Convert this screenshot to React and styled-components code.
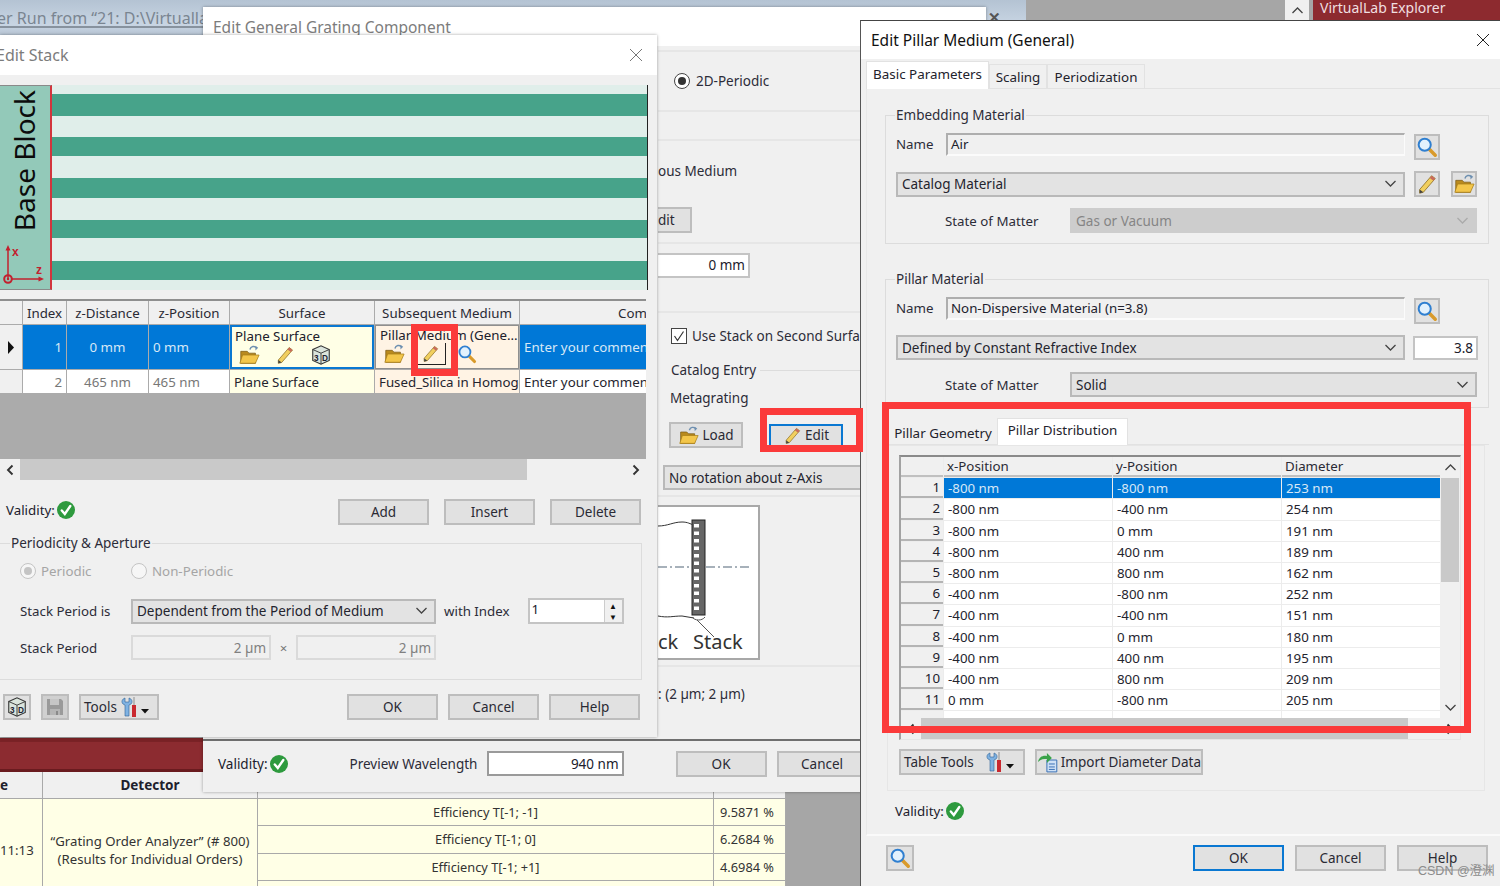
import React from 'react';
import styled, { createGlobalStyle } from 'styled-components';

const Global = createGlobalStyle`
  html, body { margin: 0; padding: 0; background: #a6a6a6; }
  * { box-sizing: border-box; }
  body { font-family: "Noto Sans", "Open Sans", sans-serif; font-size: 13.3px; color: #20202c; }
`;

/* ---------- icons ---------- */
const FolderIcon = ({ s = 22 }) => (
  <svg width={s} height={s} viewBox="0 0 24 24">
    <path d="M3 8h7l2 2h7v11H3z" fill="#b98a1e" stroke="#7a5a14" strokeWidth=".8" />
    <path d="M5 12h18l-4 9H2z" fill="#f3c64a" stroke="#a67c16" strokeWidth=".8" />
    <path d="M13 6c1-4 5-4 7-2" fill="none" stroke="#6d8fb0" strokeWidth="1.6" />
    <path d="M19 2l3 2-3 3z" fill="#6d8fb0" />
  </svg>
);
const PencilIcon = ({ s = 22 }) => (
  <svg width={s} height={s} viewBox="0 0 24 24">
    <path d="M17 3l4 3L8 21l-4 1 0-4z" fill="#f1cf5e" stroke="#8d6f24" strokeWidth=".9" />
    <path d="M17 3l4 3-2 2.4-4-3z" fill="#c96a5c" />
    <path d="M4 18l0 4 4-1z" fill="#444" />
  </svg>
);
const LensIcon = ({ s = 22 }) => (
  <svg width={s} height={s} viewBox="0 0 24 24">
    <path d="M14 14l7 7" stroke="#d99a2b" strokeWidth="3.8" strokeLinecap="round" />
    <circle cx="9.5" cy="9.5" r="6.6" fill="#e2f1fd" stroke="#2f7fd0" strokeWidth="2.2" />
  </svg>
);
const CubeIcon = ({ s = 24 }) => (
  <svg width={s} height={s} viewBox="0 0 24 24">
    <path d="M3 6l9-4 9 4v12l-9 4-9-4z" fill="#dbe5dd" stroke="#333" strokeWidth="1.2" />
    <path d="M3 6l9 4 9-4M12 10v12" fill="none" stroke="#333" strokeWidth="1" />
    <text x="4.4" y="18" fontSize="9" fontFamily="Liberation Sans" fontWeight="700" fill="#223">3</text>
    <text x="13.2" y="18" fontSize="9" fontFamily="Liberation Sans" fontWeight="700" fill="#223">D</text>
  </svg>
);
const SaveIcon = () => (
  <svg width="20" height="20" viewBox="0 0 20 20">
    <path d="M2 2h14l2 2v14H2z" fill="#9a9a9a" />
    <path d="M5 2h9v6H5z" fill="#c6c6c6" />
    <path d="M5 12h10v6H5z" fill="#b5b5b5" />
    <path d="M11 14h2v4h-2z" fill="#8a8a8a" />
  </svg>
);
const ToolsIcon = () => (
  <svg width="30" height="22" viewBox="0 0 30 22">
    <path d="M5 2c-3 1-4 4-2 6l2 1v11h4V9l2-1c2-2 1-5-2-6v4H5z" fill="#7fb2e2" stroke="#2b5f94" strokeWidth=".6" />
    <path d="M12 9h4v12h-4z" fill="#c9282f" />
    <path d="M13 1h2v8h-2z" fill="#b8b8b8" />
    <path d="M21 13h8l-4 4.500z" fill="#111" />
  </svg>
);
const CheckIcon = () => (
  <svg width="20" height="20" viewBox="0 0 20 20">
    <circle cx="10" cy="10" r="9" fill="#2e9a3e" />
    <path d="M5.800 10.500l3 3.500 5.500-8" fill="none" stroke="#fff" strokeWidth="2.400" strokeLinecap="round" />
  </svg>
);
const ImportIcon = () => (
  <svg width="24" height="22" viewBox="0 0 24 22">
    <path d="M10 9h10v12H10z" fill="#cfe1f6" stroke="#3a70b5" strokeWidth="1" />
    <path d="M12 13h6M12 16h6M12 18.500h6" stroke="#3a70b5" strokeWidth="1" />
    <path d="M1 11c1-5 5-7 9-6V2l5 5-5 5V8c-3 0-6 0-9 3z" fill="#3aa34a" />
  </svg>
);
const Chevron = ({ $c = '#444' }) => (
  <svg width="13" height="8" viewBox="0 0 13 8"><path d="M1.500 1l5 5 5-5" fill="none" stroke={$c} strokeWidth="1.300" /></svg>
);
const ScrollArrow = ({ left }) => (
  <svg width="10" height="12" viewBox="0 0 10 12">
    <path d={left ? 'M7.500 1.500L3 6l4.500 4.500' : 'M2.500 1.500L7 6l-4.500 4.500'} fill="none" stroke="#333" strokeWidth="1.900" />
  </svg>
);
const CloseX = ({ c = '#222' }) => (
  <svg width="14" height="14" viewBox="0 0 14 14"><path d="M1 1l12 12M13 1L1 13" stroke={c} strokeWidth="1" /></svg>
);
const Tick = () => (
  <svg width="12" height="12" viewBox="0 0 12 12"><path d="M1.500 6l3 4.500 6-9" fill="none" stroke="#333" strokeWidth="1.200" /></svg>
);
const Axes = () => (
  <svg width="46" height="44" viewBox="0 0 46 44">
    <g stroke="#c2202e" strokeWidth="1.500" fill="none">
      <path d="M8 35V6" /><path d="M11 35h30" />
      <circle cx="8" cy="35" r="3.800" strokeWidth="2" />
    </g>
    <circle cx="8" cy="35" r="1.200" fill="#c2202e" />
    <path d="M8 1l-2.500 5.500h5zM44 35l-5.500-2.500v5z" fill="#c2202e" />
    <text x="12" y="12" fontSize="12" fontFamily="Liberation Sans" fontWeight="700" fill="#c2202e">x</text>
    <text x="36" y="30" fontSize="12" fontFamily="Liberation Sans" fontWeight="700" fill="#c2202e">z</text>
  </svg>
);

/* ---------- shell ---------- */
const Desktop = styled.div`
  position: relative; width: 1500px; height: 886px; overflow: hidden; background: #a6a6a6;
`;
const AppStrip = styled.div`
  position: absolute; left: 0; top: 0; width: 1026px; height: 36px;
  background: linear-gradient(#b4c3d3, #c8d5e3 70%, #b7c5d4);
  border-bottom: 1px solid #9aa8b6;
`;
const StripTitle = styled.div`
  height: 28px; padding-top: 8px; border-bottom: 2px solid #87929e;
  font-size: 16px; line-height: 20px; color: #7a8591; white-space: nowrap; text-indent: -3px; width: 203px; overflow: hidden;
`;
const StripClose = styled.div`
  position: absolute; left: 988px; top: 10px; width: 16px; height: 14px; font-size: 15px; line-height: 14px; font-weight: 700; color: #555;
`;
const ExplorerCorner = styled.div`
  position: absolute; left: 1285px; top: 0; width: 215px; height: 20px; display: flex;
`;
const ScrollUp = styled.div`
  width: 24px; height: 20px; background: #f0f0f0; color: #444; display: flex; align-items: center; justify-content: center;
`;
const UpFlip = styled.span` display: flex; transform: rotate(180deg); `;
const ExplorerTitle = styled.div`
  flex: 1; margin-left: 4px; background: #8d2a2f; color: #f0dfe0; font-size: 14px; line-height: 15px; padding-left: 7px;
`;

/* ---------- results table behind the dialogs ---------- */
const Results = styled.div`
  position: absolute; left: 0; top: 738px; width: 786px; height: 148px; display: flex; flex-direction: column; overflow: hidden;
`;
const RedBand = styled.div`
  height: 34px; flex: none; background: #8c2b30; border-top: 4px solid #7a2226; border-bottom: 3px solid #6a1b1f;
`;
const ResultGrid = styled.div`
  flex: none; display: grid; grid-template-columns: 42px 214px 455px 71px; grid-template-rows: 26px 26.300px 26.300px 26.300px 20px; gap: 1px; background: #a9a9a9;
`;
const ResultHead = styled.div`
  background: #f0f0f0; font-weight: 700; display: flex; align-items: center; justify-content: center; font-size: 13.500px;
  overflow: hidden;
`;
const ResultHeadE = styled(ResultHead)` justify-content: flex-start; `;
const ResultSpan = styled.div`
  grid-row: 2 / span 4; background: #ffffe6; display: flex; align-items: center; justify-content: ${p => (p.$left ? 'flex-start' : 'center')}; text-align: center; line-height: 18px; font-size: 13.200px; color: #333;
`;
const ResultCell = styled.div`
  background: #ffffe6; display: flex; align-items: center; justify-content: center; font-size: 12.800px; color: #333; white-space: nowrap; overflow: hidden;
`;
const ResultValue = styled(ResultCell)` justify-content: flex-start; padding-left: 6px; `;

/* ---------- generic controls ---------- */
const Window = styled.div`
  position: absolute; left: ${p => p.$x}px; top: ${p => p.$y}px; width: ${p => p.$w}px; height: ${p => p.$h}px;
  background: #f0f0f0; display: flex; flex-direction: column; overflow: hidden;
  box-shadow: 0 0 3px rgba(0,0,0,.35);
`;
const TitleBar = styled.div`
  height: ${p => p.$h}px; flex: none; background: #fff; display: flex; align-items: center; justify-content: space-between;
  padding: 0 ${p => p.$pr ?? 15}px 0 ${p => p.$pl ?? 10}px; font-size: ${p => p.$fs ?? 15.500}px;
  color: ${p => p.$c ?? '#7c7c7c'}; overflow: hidden; white-space: nowrap;
`;
const ClippedTitle = styled.span` margin-left: -4px; `;
const Btn = styled.div`
  width: ${p => p.$w ?? 91}px; height: ${p => p.$h ?? 26}px; flex: none; background: ${p => (p.$dim ? '#d0d0d0' : '#e1e1e1')};
  border: ${p => (p.$primary ? '2px solid #0a78d2' : '2px solid #bdbdbd')}; display: flex; align-items: center;
  justify-content: ${p => p.$j ?? 'center'}; gap: ${p => p.$gap ?? 3}px; padding-left: ${p => p.$pl ?? 0}px; margin-left: ${p => p.$ml ?? 0}px;
  margin-top: ${p => p.$nudge ?? 0}px; margin-bottom: ${p => -(p.$nudge ?? 0)}px;
  font-size: 13.500px; white-space: nowrap; color: #2a2a34;
`;
const Select = styled.div`
  width: ${p => p.$w}px; height: 25px; flex: none; display: flex; align-items: center; justify-content: space-between;
  padding: 0 6px 0 4px; background: ${p => (p.$off ? '#cdcdcd' : '#e3e3e3')}; border: 2px solid ${p => (p.$off ? '#cdcdcd' : '#b9b9b9')};
  font-size: 13.500px; color: ${p => (p.$off ? '#858585' : '#24242e')}; white-space: nowrap; overflow: hidden;
  margin-top: ${p => p.$mt ?? 0}px;
`;
const Field = styled.div`
  width: ${p => p.$w}px; height: ${p => p.$h ?? 25}px; flex: none; display: flex; align-items: center;
  justify-content: ${p => (p.$right ? 'flex-end' : 'flex-start')}; padding: 0 3px; margin-left: ${p => p.$ml ?? 0}px;
  background: ${p => (p.$off ? '#f0f0f0' : '#fff')}; border: 2px solid ${p => (p.$off ? '#dadada' : p.$dark ? '#9a9a9a' : '#c4c4c4')};
  ${p => p.$openLeft && 'border-left: 0;'}
  color: ${p => (p.$off ? '#808080' : '#20202c')}; font-size: 13.500px; white-space: nowrap;
`;
const ReadOnly = styled.div`
  width: ${p => p.$w}px; height: 23px; flex: none; display: flex; align-items: center; padding: 0 3px; font-size: 13.300px;
  border-top: 2px solid #aeaeae; border-left: 2px solid #aeaeae; border-bottom: 2px solid #fbfbfb; border-right: 1px solid #fbfbfb;
`;
const Label = styled.span`
  flex: none; white-space: nowrap; line-height: 18px; color: ${p => (p.$off ? '#a5a5a5' : '#2c2c38')}; width: ${p => (p.$w ? `${p.$w}px` : 'auto')};
  margin: ${p => p.$m ?? '0'}; padding-left: ${p => p.$pl ?? 0}px;
`;
const Times = styled(Label)` width: 25px; text-align: center; color: #777; `;
const ValidRow = styled.div` display: flex; align-items: center; gap: 1px; white-space: nowrap; flex: none; margin-bottom: ${p => p.$lift ?? 0}px; `;
const Validity = ({ lift }) => <ValidRow $lift={lift}>Validity:<CheckIcon /></ValidRow>;
const Row = styled.div`
  display: flex; align-items: center; gap: ${p => p.$gap ?? 0}px; margin: ${p => p.$m ?? '0'}; padding: ${p => p.$p ?? '0'};
`;
const Spacer = styled.div` flex: 1; `;
const Group = styled.div`
  position: relative; border: 1px solid #dcdcdc; flex: none; margin: ${p => p.$m ?? '0'}; height: ${p => p.$h}px; width: ${p => p.$w}px;
`;
const OpenGroup = styled(Group)` border-left: 0; `;
const GroupTitle = styled.div`
  position: absolute; left: ${p => p.$x ?? 10}px; top: -10px; background: #f0f0f0; padding: 0 1px; font-size: 13.500px; line-height: 18px; white-space: nowrap; color: #2c2c38;
`;
const Radio = styled.span`
  width: 16px; height: 16px; border-radius: 50%; flex: none; border: 1px solid ${p => (p.$off ? '#c4c4c4' : '#444')};
  background: ${p => (p.$off ? '#f6f6f6' : '#fff')}; display: flex; align-items: center; justify-content: center;
  &::after { content: ''; width: 8px; height: 8px; border-radius: 50%; background: ${p => (p.$on ? (p.$off ? '#c4c4c4' : '#333') : 'transparent')}; }
`;

/* ---------- stack dialog ---------- */
const Diagram = styled.div`
  display: flex; width: 648px; height: 205px; margin-top: 10px; flex: none; border-right: 1px solid #222;
`;
const BaseBlock = styled.div`
  position: relative; width: 52px; flex: none; background: #93c9b9; border: 1px solid #8a8a8a; border-right: 2px solid #d2353d; border-left: 0;
`;
const BaseText = styled.div`
  position: absolute; left: 9px; top: 4px; writing-mode: vertical-rl; transform: rotate(180deg); font-size: 28px; line-height: 30px; color: #0c0c0c; white-space: nowrap;
`;
const AxisSlot = styled.div` position: absolute; left: 0; bottom: 1px; height: 44px; `;
const Bands = styled.div` flex: 1; display: flex; flex-direction: column; background: #e0eeea; `;
const Band = styled.div`
  height: ${p => p.$h}px; flex: none; background: ${p => (p.$dark ? '#47a38a' : '#e0eeea')};
`;
const StackTable = styled.div`
  width: 646px; margin-top: 9px; flex: none; border-top: 2px solid #8f8f8f; background: #ababab;
  display: grid; grid-template-columns: 22px 43px 81px 80px 144px 144px 127px; grid-template-rows: 23px 44px 23px 65px; gap: 1px; overflow: hidden;
  font-size: 13.300px;
`;
const HCell = styled.div`
  background: #f0f0f0; display: flex; align-items: center; justify-content: ${p => p.$j ?? 'center'}; white-space: nowrap; overflow: hidden; color: #2a2a34;
`;
const SelCell = styled.div`
  background: #0078d7; color: #d8e8f6; display: flex; align-items: center; justify-content: ${p => p.$j ?? 'flex-start'}; padding: 0 4px; white-space: nowrap; overflow: hidden;
`;
const PlainCell = styled.div`
  background: ${p => p.$bg ?? '#fff'}; color: ${p => p.$c ?? '#24242e'}; display: flex; align-items: center; justify-content: ${p => p.$j ?? 'flex-start'}; padding: 0 4px; white-space: nowrap; overflow: hidden;
`;
const StackCell = styled.div`
  background: ${p => p.$bg}; border: ${p => p.$b}; padding: 0 3px 0 ${p => p.$pl ?? 3}px; overflow: hidden; white-space: nowrap; line-height: 18px;
`;
const IconRow = styled.div` display: flex; gap: ${p => p.$gap ?? 13}px; padding-left: 3px; margin-top: -1px; align-items: center; height: 22px; `;
const PressedIcon = styled.div`
  display: flex; align-items: center; justify-content: center; width: 30px; height: 22px; border-right: 1px solid #222; border-bottom: 1px solid #222;
`;
const GrayFill = styled.div` grid-column: 1 / -1; background: #ababab; `;
const HScroll = styled.div`
  width: ${p => p.$w}px; height: ${p => p.$h ?? 21}px; flex: none; display: flex; align-items: center; background: #f0f0f0; color: #333;
`;
const Thumb = styled.div` height: 100%; background: #c9c9c9; margin: ${p => p.$m}; width: ${p => p.$w}px; flex: none; `;
const ArrowSlot = styled.span` width: ${p => p.$w ?? 20}px; display: flex; justify-content: center; flex: none; `;
const StackControls = styled.div` display: flex; flex-direction: column; width: 642px; `;
const Spin = styled.div`
  width: 96px; height: 26px; flex: none; background: #fff; border: 2px solid #c4c4c4; display: flex; justify-content: space-between; padding-left: 2px; font-size: 13.300px; line-height: 18px; margin-left: 18px;
`;
const SpinBtns = styled.div`
  width: 18px; display: flex; flex-direction: column; background: #f0f0f0; border-left: 1px solid #ccc; font-size: 8px; line-height: 11px; text-align: center; color: #111;
`;

/* ---------- grating dialog ---------- */
const GratingColumn = styled.div`
  margin-left: 455px; width: 330px; display: flex; flex-direction: column; flex: 1; font-size: 13.500px;
`;
const Sect = styled.div`
  height: ${p => p.$h}px; margin-top: ${p => p.$mt ?? 0}px; flex: none; border-top: 2px solid #e6e6e6; ${p => p.$bb && 'border-bottom: 2px solid #e6e6e6;'}
  display: flex; align-items: ${p => p.$a ?? 'center'}; padding: ${p => p.$p ?? '0'}; gap: 6px; position: relative;
`;
const Stacked = styled.div` display: flex; flex-direction: column; align-items: flex-start; `;
const LegendRow = styled.div` display: flex; align-items: center; gap: 4px; width: 300px; margin: 16px 0 0 8px; `;
const LegendLine = styled.div` flex: 1; height: 1px; background: #dcdcdc; `;
const Hr = styled.div` width: 330px; height: 2px; flex: none; background: #e6e6e6; margin: ${p => p.$m}; `;
const Check = styled.span`
  width: 16px; height: 16px; flex: none; background: #fff; border: 1px solid #444; display: flex; align-items: center; justify-content: center;
`;
const Sketch = styled.div`
  width: 102px; height: 155px; margin: 8px 0 0 -5px; flex: none; border: 2px solid #a8a8a8; border-left: 0; background: #fff;
`;
const GratingFoot = styled.div`
  height: 54px; flex: none; border-top: 2px solid #6f6f6f; display: flex; align-items: center; padding: 0 0 7px 15px; font-size: 13.500px;
`;

/* ---------- pillar dialog ---------- */
const PillarWin = styled(Window)` border-left: 1px solid #555; border-top: 1px solid #444; box-shadow: none; `;
const TabStrip = styled.div`
  display: flex; align-items: flex-end; margin: ${p => p.$m}; height: ${p => p.$h}px; flex: none; border-bottom: 1px solid #e2e2e2;
`;
const Tab = styled.div`
  height: ${p => (p.$active ? p.$h + 1 : p.$h - 3)}px; padding: ${p => p.$p}; width: ${p => p.$w}px; flex: none; white-space: nowrap; text-align: center;
  background: ${p => (p.$active ? '#fff' : '#f0f0f0')}; border: ${p => (p.$plain ? '0' : '1px solid #e2e2e2')}; border-bottom: 0;
  margin-bottom: ${p => (p.$active ? -1 : 0)}px; font-size: 13.400px; line-height: 18px; color: #22222c;
`;
const MainPanel = styled.div`
  margin-left: 5px; height: 747px; flex: none; border-left: 1px solid #e8e8e8; border-bottom: 2px solid #fafafa; padding: 26px 11px 0 18px; display: flex; flex-direction: column; position: relative;
`;
const PGroup = styled(Group)` padding: 0 0 0 10px; display: flex; flex-direction: column; `;
const SubPanel = styled.div`
  width: 598px; height: 346px; margin-left: 2px; flex: none; border: 1px solid #e6e6e6; padding: 9px 0 0 11px; display: flex; flex-direction: column;
`;
const Dist = styled.div`
  width: 562px; height: 285px; flex: none; position: relative; border-top: 2px solid #8a8a8a; border-left: 2px solid #a2a2a2; border-right: 1px solid #e6e6e6; border-bottom: 1px solid #e6e6e6; background: #fff; display: flex; flex-direction: column; overflow: hidden;
`;
const DistBody = styled.div` display: flex; flex: 1; min-height: 0; `;
const DistRows = styled.div` width: 539px; display: flex; flex-direction: column; overflow: hidden; flex: none; `;
const DistRow = styled.div`
  display: grid; grid-template-columns: 42px 168px 168px 158px; gap: 1px; height: 21.200px; flex: none; background: #ececec; padding-bottom: 1px; font-size: 13.300px;
`;
const DH = styled.div` background: #f0f0f0; display: flex; align-items: center; padding-left: 3px; border-bottom: 2px solid #c0c0c0; overflow: hidden; white-space: nowrap; color: #2a2a34; `;
const DNum = styled.div` background: #f0f0f0; display: flex; align-items: center; justify-content: flex-end; padding-right: 3px; border-bottom: 2px solid #b4b4b4; `;
const DCell = styled.div`
  background: ${p => (p.$sel ? '#0078d7' : '#fff')}; color: ${p => (p.$sel ? '#d8e8f6' : '#24242e')}; display: flex; align-items: center; padding-left: 4px; white-space: nowrap;
`;
const VBar = styled.div` width: 20px; flex: none; background: #f0f0f0; display: flex; flex-direction: column; align-items: center; `;
const VArrow = styled.div` height: 21px; flex: none; display: flex; align-items: center; justify-content: center; transform: ${p => (p.$up ? 'rotate(180deg)' : 'none')}; `;
const VThumb = styled.div` width: 18px; height: 104px; flex: none; background: #c9c9c9; `;
const Bottom = styled.div`
  display: flex; align-items: center; padding: 9px 12px 0 25px; flex: none;
`;

/* ---------- overlays ---------- */
const Mark = styled.div`
  position: absolute; left: ${p => p.$x}px; top: ${p => p.$y}px; width: ${p => p.$w}px; height: ${p => p.$h}px;
  border: 7px solid #fb3a3a; pointer-events: none;
`;
const Watermark = styled.div`
  position: absolute; left: 1418px; top: 864px; font-size: 12.500px; line-height: 14px; color: #8c8c8c;
  font-family: "Liberation Sans", "Noto Sans CJK SC", sans-serif; white-space: nowrap;
`;

const rows = [
  ['-800 nm', '-800 nm', '253 nm'], ['-800 nm', '-400 nm', '254 nm'], ['-800 nm', '0 mm', '191 nm'],
  ['-800 nm', '400 nm', '189 nm'], ['-800 nm', '800 nm', '162 nm'], ['-400 nm', '-800 nm', '252 nm'],
  ['-400 nm', '-400 nm', '151 nm'], ['-400 nm', '0 mm', '180 nm'], ['-400 nm', '400 nm', '195 nm'],
  ['-400 nm', '800 nm', '209 nm'], ['0 mm', '-800 nm', '205 nm'], ['', '', ''],
];
const bands = [[9, 0], [22, 1], [21, 0], [19, 1], [22, 0], [20, 1], [22, 0], [18, 1], [23, 0], [19, 1], [10, 0]];
const results = [['Efficiency T[-1; -1]', '9.5871 %'], ['Efficiency T[-1; 0]', '6.2684 %'], ['Efficiency T[-1; +1]', '4.6984 %']];

const StackSketch = () => (
  <svg width="100" height="151" viewBox="0 0 100 151">
    <path d="M0 19c10 0 15-4 24-4 6 0 8 2 12 3M0 109c10 2 15 0 24 0l12 2" fill="none" stroke="#333" strokeWidth="1" />
    <rect x="34" y="13" width="13" height="95" fill="#666" stroke="#222" />
    {Array.from({ length: 12 }, (_, i) => <rect key={i} x="36" y={17 + i * 7.500} width="5" height="3.500" fill="#fff" />)}
    <path d="M0 60h34M48 60h44" stroke="#8a98a4" strokeWidth="1.300" strokeDasharray="9 3 2 3" />
    <path d="M34 110c3 4 10 4 13 0M39 113l17 17" fill="none" stroke="#555" strokeWidth="1" />
    <text x="35" y="142" fontSize="20" fontFamily="Noto Sans" fill="#333">Stack</text>
    <text x="0" y="142" fontSize="20" fontFamily="Noto Sans" fill="#333">ck</text>
  </svg>
);

export default function App() {
  return (
    <Desktop>
      <Global />
      <AppStrip>
        <StripTitle>er Run from “21: D:\Virtuallab</StripTitle>
        <StripClose>✕</StripClose>
      </AppStrip>
      <ExplorerCorner>
        <ScrollUp><UpFlip><Chevron /></UpFlip></ScrollUp>
        <ExplorerTitle>VirtualLab Explorer</ExplorerTitle>
      </ExplorerCorner>

      <Results>
        <RedBand />
        <ResultGrid>
          <ResultHeadE>e</ResultHeadE>
          <ResultHead>Detector</ResultHead>
          <ResultHead />
          <ResultHead />
          <ResultSpan $left>11:13</ResultSpan>
          <ResultSpan>“Grating Order Analyzer” (# 800)<br />(Results for Individual Orders)</ResultSpan>
          {results.map(([a, b]) => (
            <React.Fragment key={a}>
              <ResultCell>{a}</ResultCell>
              <ResultValue>{b}</ResultValue>
            </React.Fragment>
          ))}
          <ResultCell />
          <ResultValue />
        </ResultGrid>
      </Results>

      {/* Edit General Grating Component */}
      <Window $x={203} $y={7} $w={783} $h={785}>
        <TitleBar $h={39} $fs={15.500}>Edit General Grating Component</TitleBar>
        <GratingColumn>
          <Sect $h={62} $mt={4} $bb $p="0 0 0 16px"><Radio $on /><Label>2D-Periodic</Label></Sect>
          <Sect $h={103} $mt={27} $a="flex-start">
            <Stacked>
              <Label $m="21px 0 0 0">ous Medium</Label>
              <Btn $w={34} $j="flex-start" style={{ marginTop: 27, borderLeft: 0 }}>dit</Btn>
            </Stacked>
          </Sect>
          <Sect $h={44}><Field $w={92} $right $openLeft>0 mm</Field></Sect>
          <Sect $h={428} $mt={25} $a="flex-start" $p="0 0 0 5px">
            <Stacked>
              <Row $gap={5} $m="14px 0 0 8px"><Check><Tick /></Check><Label>Use Stack on Second Surface</Label></Row>
              <LegendRow><Label>Catalog Entry</Label><LegendLine /></LegendRow>
              <Label $m="10px 0 0 7px">Metagrating</Label>
              <Row $gap={26} $m="15px 0 0 6px">
                <Btn $w={74}><FolderIcon s={21} />Load</Btn>
                <Btn $w={74} $primary $h={23}><PencilIcon s={19} />Edit</Btn>
              </Row>
              <Select $w={320} $mt={17}>No rotation about z-Axis</Select>
              <Hr $m="5px 0 0 -5px" />
              <Sketch><StackSketch /></Sketch>
              <Hr $m="5px 0 0 -5px" />
              <Label $m="18px 0 0 -5px">: (2 µm; 2 µm)</Label>
            </Stacked>
          </Sect>
        </GratingColumn>
        <GratingFoot>
          <Validity />
          <Label $w={137} $m="0 0 0 61px">Preview Wavelength</Label>
          <Field $w={137} $right $dark>940 nm</Field>
          <Btn $ml={52}>OK</Btn>
          <Btn $ml={10}>Cancel</Btn>
        </GratingFoot>
      </Window>

      {/* Edit Stack */}
      <Window $x={0} $y={35} $w={657} $h={702}>
        <TitleBar $h={40} $pl={0} $pr={14} $fs={16}>
          <ClippedTitle>Edit Stack</ClippedTitle><CloseX c="#777" />
        </TitleBar>
        <Diagram>
          <BaseBlock>
            <BaseText>Base Block</BaseText>
            <AxisSlot><Axes /></AxisSlot>
          </BaseBlock>
          <Bands>{bands.map(([h, d], i) => <Band key={i} $h={h} $dark={!!d} />)}</Bands>
        </Diagram>
        <StackTable>
          <HCell />
          <HCell>Index</HCell>
          <HCell>z-Distance</HCell>
          <HCell>z-Position</HCell>
          <HCell>Surface</HCell>
          <HCell>Subsequent Medium</HCell>
          <HCell $j="flex-end">Com</HCell>

          <HCell><svg width="8" height="13" viewBox="0 0 8 13"><path d="M1 0l6 6.500-6 6.500z" fill="#111" /></svg></HCell>
          <SelCell $j="flex-end">1</SelCell>
          <SelCell $j="center">0 mm</SelCell>
          <SelCell>0 mm</SelCell>
          <StackCell $bg="#ffffe6" $b="2px solid #0a78d2">
            Plane Surface
            <IconRow $gap={15}><FolderIcon /><PencilIcon s={20} /><CubeIcon s={22} /></IconRow>
          </StackCell>
          <StackCell $bg="#fff3e4" $b="1px solid #8f8f8f" $pl={4}>
            Pillar Medium (Gene...
            <IconRow $gap={11}><FolderIcon /><PressedIcon><PencilIcon s={19} /></PressedIcon><LensIcon s={20} /></IconRow>
          </StackCell>
          <SelCell>Enter your comment</SelCell>

          <HCell />
          <PlainCell $j="flex-end" $c="#777">2</PlainCell>
          <PlainCell $j="center" $c="#777">465 nm</PlainCell>
          <PlainCell $c="#777">465 nm</PlainCell>
          <PlainCell $bg="#ffffe6">Plane Surface</PlainCell>
          <PlainCell $bg="#fff3e4">Fused_Silica in Homogeneous</PlainCell>
          <PlainCell>Enter your comment</PlainCell>
          <GrayFill />
        </StackTable>
        <HScroll $w={646}>
          <ArrowSlot><ScrollArrow left /></ArrowSlot>
          <Thumb $m="0" $w={507} />
          <Spacer />
          <ArrowSlot><ScrollArrow /></ArrowSlot>
        </HScroll>
        <StackControls>
          <Row $p="19px 1px 0 6px">
            <Validity lift={4} />
            <Spacer />
            <Row $gap={15}><Btn>Add</Btn><Btn>Insert</Btn><Btn>Delete</Btn></Row>
          </Row>
          <OpenGroup $h={137} $w={642} $m="18px 0 0 0">
            <GroupTitle>Periodicity &amp; Aperture</GroupTitle>
            <Row $m="18px 0 0 20px" $gap={5}>
              <Radio $on $off /><Label $off $w={85}>Periodic</Label>
              <Radio $off /><Label $off>Non-Periodic</Label>
            </Row>
            <Row $m="18px 0 0 20px">
              <Label $w={111}>Stack Period is</Label>
              <Select $w={305}>Dependent from the Period of Medium<Chevron /></Select>
              <Label $m="0 0 0 8px">with Index</Label>
              <Spin>1<SpinBtns><span>▲</span><span>▼</span></SpinBtns></Spin>
            </Row>
            <Row $m="11px 0 0 20px">
              <Label $w={111}>Stack Period</Label>
              <Field $off $right $w={140}>2 µm</Field>
              <Times>×</Times>
              <Field $off $right $w={140}>2 µm</Field>
            </Row>
          </OpenGroup>
          <Row $m="14px 2px 0 3px">
            <Btn $w={28}><CubeIcon s={22} /></Btn>
            <Btn $w={28} $dim $ml={10}><SaveIcon /></Btn>
            <Btn $w={80} $ml={10} $j="flex-start" $pl={3}>Tools<ToolsIcon /></Btn>
            <Spacer />
            <Row $gap={10}><Btn>OK</Btn><Btn>Cancel</Btn><Btn>Help</Btn></Row>
          </Row>
        </StackControls>
      </Window>

      {/* Edit Pillar Medium */}
      <PillarWin $x={860} $y={20} $w={640} $h={866}>
        <TitleBar $h={38} $c="#111" $pr={10}>
          Edit Pillar Medium (General)<CloseX />
        </TitleBar>
        <TabStrip $m="3px 0 0 5px" $h={27}>
          <Tab $active $h={27} $w={123} $p="3px 0 0 0">Basic Parameters</Tab>
          <Tab $h={27} $w={58} $p="3px 0 0 0">Scaling</Tab>
          <Tab $h={27} $w={98} $p="3px 0 0 0">Periodization</Tab>
        </TabStrip>
        <MainPanel>
          <PGroup $w={604} $h={129}>
            <GroupTitle $x={9}>Embedding Material</GroupTitle>
            <Row $m="15px 0 0 0">
              <Label $w={50}>Name</Label>
              <ReadOnly $w={459}>Air</ReadOnly>
              <Btn $w={26} $ml={9} $nudge={3}><LensIcon /></Btn>
            </Row>
            <Row $m="14px 0 0 0">
              <Select $w={509}>Catalog Material<Chevron /></Select>
              <Btn $w={26} $ml={9}><PencilIcon /></Btn>
              <Btn $w={26} $ml={11}><FolderIcon /></Btn>
            </Row>
            <Row $m="11px 0 0 0">
              <Label $w={174} $pl={49}>State of Matter</Label>
              <Select $off $w={407}>Gas or Vacuum<Chevron $c="#aaa" /></Select>
            </Row>
          </PGroup>
          <PGroup $w={604} $h={129} $m="35px 0 0 0">
            <GroupTitle $x={9}>Pillar Material</GroupTitle>
            <Row $m="15px 0 0 0">
              <Label $w={50}>Name</Label>
              <ReadOnly $w={459}>Non-Dispersive Material (n=3.8)</ReadOnly>
              <Btn $w={26} $ml={9} $nudge={3}><LensIcon /></Btn>
            </Row>
            <Row $m="14px 0 0 0">
              <Select $w={509}>Defined by Constant Refractive Index<Chevron /></Select>
              <Field $w={65} $right $h={24} $ml={8}>3.8</Field>
            </Row>
            <Row $m="12px 0 0 0">
              <Label $w={174} $pl={49}>State of Matter</Label>
              <Select $w={407}>Solid<Chevron /></Select>
            </Row>
          </PGroup>
          <TabStrip $m="10px 0 0 2px" $h={27}>
            <Tab $plain $h={27} $w={110} $p="4px 0 0 2px">Pillar Geometry</Tab>
            <Tab $active $h={26} $w={131} $p="2px 0 0 0">Pillar Distribution</Tab>
          </TabStrip>
          <SubPanel>
            <Dist>
              <DistBody>
                <DistRows>
                  <DistRow>
                    <DH /><DH>x-Position</DH><DH>y-Position</DH><DH>Diameter</DH>
                  </DistRow>
                  {rows.map((r, i) => (
                    <DistRow key={i}>
                      <DNum>{r[0] ? i + 1 : ''}</DNum>
                      {r.map((c, j) => <DCell key={j} $sel={i === 0}>{c}</DCell>)}
                    </DistRow>
                  ))}
                </DistRows>
                <VBar>
                  <VArrow $up><Chevron /></VArrow>
                  <VThumb />
                  <Spacer />
                  <VArrow><Chevron /></VArrow>
                </VBar>
              </DistBody>
              <HScroll $w={559} $h={21}>
                <ArrowSlot><ScrollArrow left /></ArrowSlot>
                <Thumb $m="0" $w={487} />
                <Spacer />
                <ArrowSlot><ScrollArrow /></ArrowSlot>
              </HScroll>
            </Dist>
            <Row $gap={10} $m="9px 0 0 0">
              <Btn $w={126} $j="flex-start" $pl={3} $gap={11}>Table Tools<ToolsIcon /></Btn>
              <Btn $w={168} $gap={0}><ImportIcon />Import Diameter Data</Btn>
            </Row>
          </SubPanel>
          <Row $m="10px 0 0 10px"><Validity /></Row>
        </MainPanel>
        <Bottom>
          <Btn $w={28}><LensIcon /></Btn>
          <Spacer />
          <Row $gap={11}><Btn $primary>OK</Btn><Btn>Cancel</Btn><Btn>Help</Btn></Row>
        </Bottom>
      </PillarWin>

      <Mark $x={882} $y={402} $w={589} $h={331} />
      <Mark $x={760} $y={408} $w={103} $h={44} />
      <Mark $x={411} $y={324} $w={47} $h={52} />
      <Watermark>CSDN @澄渊</Watermark>
    </Desktop>
  );
}
